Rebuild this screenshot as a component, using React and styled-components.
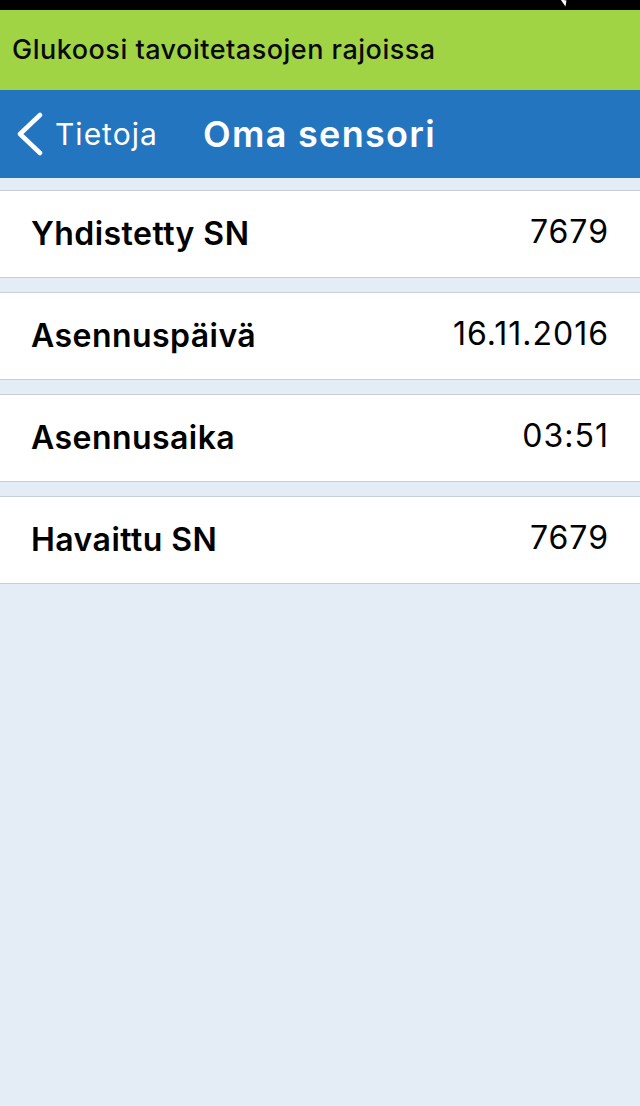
import React from 'react'
import styled, { createGlobalStyle } from 'styled-components'

const GlobalStyle = createGlobalStyle`
  html, body {
    margin: 0;
    padding: 0;
    background: #e4ecf5;
  }
  body {
    font-family: Inter, "Noto Sans", sans-serif;
    -webkit-font-smoothing: antialiased;
  }
  * {
    box-sizing: border-box;
  }
`

const Page = styled.div`
  min-height: 1106px;
  display: flex;
  flex-direction: column;
  background: #e4ecf5;
`

const StatusBar = styled.div`
  height: 10px;
  background: #000;
  display: flex;
  justify-content: flex-end;
  padding-right: 74px;
`

const StatusGlyph = styled.div`
  width: 0;
  height: 0;
  border-left: 6px solid transparent;
  border-top: 6px solid #fff;
  transform: rotate(10deg);
`

const Banner = styled.div`
  height: 80px;
  background: #a0d445;
  display: flex;
  align-items: center;
  padding: 0 0 2px 12px;
  font-size: 27px;
  font-weight: 500;
  color: #0a0a0a;
  letter-spacing: 0.5px;
`

const NavBar = styled.div`
  height: 88px;
  background: #2475bf;
  display: flex;
  align-items: center;
  color: #fff;
`

const BackButton = styled.div`
  display: flex;
  align-items: center;
  gap: 12px;
  padding-left: 15px;
  width: 203px;
  font-size: 30px;
  font-weight: 400;
  letter-spacing: 1px;
`

const Title = styled.div`
  font-size: 36px;
  font-weight: 600;
  letter-spacing: 1.3px;
`

const List = styled.div`
  display: flex;
  flex-direction: column;
  gap: 14px;
  padding-top: 12px;
`

const Row = styled.div`
  height: 88px;
  background: #fff;
  border-top: 1px solid #c9ced4;
  border-bottom: 1px solid #c9ced4;
  display: flex;
  align-items: center;
  justify-content: space-between;
  padding: 0 31px;
  color: #000;
`

const Label = styled.span`
  font-size: 32px;
  font-weight: 600;
  letter-spacing: 0.45px;
  margin-top: -1px;
`

const Value = styled.span`
  font-size: 32px;
  font-weight: 400;
  letter-spacing: 1px;
  margin-top: -5px;
`

const rows = [
  { label: 'Yhdistetty SN', value: '7679' },
  { label: 'Asennuspäivä', value: '16.11.2016' },
  { label: 'Asennusaika', value: '03:51' },
  { label: 'Havaittu SN', value: '7679' },
]

export default function App() {
  return (
    <Page>
      <GlobalStyle />
      <StatusBar>
        <StatusGlyph />
      </StatusBar>
      <Banner>Glukoosi tavoitetasojen rajoissa</Banner>
      <NavBar>
        <BackButton>
          <svg width="28" height="44" viewBox="0 0 28 44">
            <path d="M25 3 L5 22 L25 41" fill="none" stroke="#fff" strokeWidth="4.5" strokeLinecap="round" strokeLinejoin="round" />
          </svg>
          <span>Tietoja</span>
        </BackButton>
        <Title>Oma sensori</Title>
      </NavBar>
      <List>
        {rows.map((r) => (
          <Row key={r.label}>
            <Label>{r.label}</Label>
            <Value>{r.value}</Value>
          </Row>
        ))}
      </List>
    </Page>
  )
}
